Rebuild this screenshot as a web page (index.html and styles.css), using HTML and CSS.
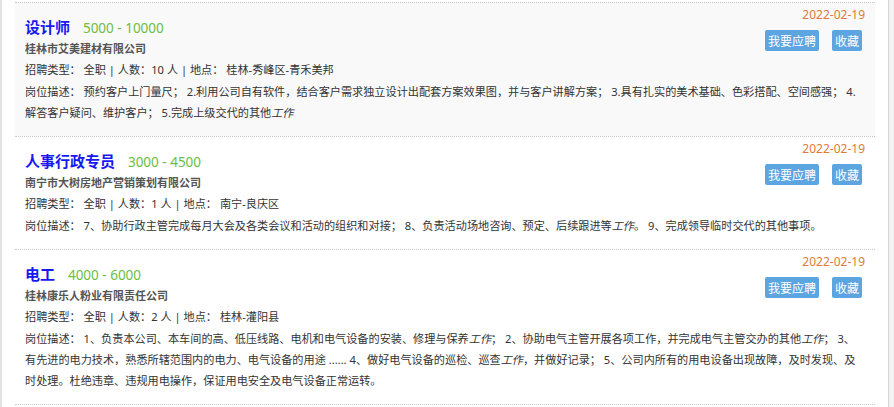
FILE: index.html
```html
<!DOCTYPE html>
<html lang="zh-CN">
<head>
    <meta charset="UTF-8">
    <meta name="viewport" content="width=device-width, initial-scale=1.0">
    <title>招聘信息</title>
    <link rel="stylesheet" href="styles.css">
</head>
<body>
    <div class="page">
        <div class="main">
            <!-- 职位 1 -->
            <div class="job active">
                <div class="job-head">
                    <div class="job-left">
                        <div class="job-title">
                            <a href="#" class="name">设计师</a>
                            <span class="salary">5000 - 10000</span>
                        </div>
                        <div class="company">桂林市艾美建材有限公司</div>
                    </div>
                    <div class="job-right">
                        <div class="date">2022-02-19</div>
                        <div class="actions">
                            <button class="btn">我要应聘</button>
                            <button class="btn">收藏</button>
                        </div>
                    </div>
                </div>
                <div class="info">招聘类型： 全职 | 人数：10 人 | 地点： 桂林-秀峰区-青禾美邦</div>
                <div class="desc">岗位描述： 预约客户上门量尺； 2.利用公司自有软件，结合客户需求独立设计出配套方案效果图，并与客户讲解方案； 3.具有扎实的美术基础、色彩搭配、空间感强； 4.解答客户疑问、维护客户； 5.完成上级交代的其他<i>工作</i></div>
            </div>
            <!-- 职位 2 -->
            <div class="job">
                <div class="job-head">
                    <div class="job-left">
                        <div class="job-title">
                            <a href="#" class="name">人事行政专员</a>
                            <span class="salary">3000 - 4500</span>
                        </div>
                        <div class="company">南宁市大树房地产营销策划有限公司</div>
                    </div>
                    <div class="job-right">
                        <div class="date">2022-02-19</div>
                        <div class="actions">
                            <button class="btn">我要应聘</button>
                            <button class="btn">收藏</button>
                        </div>
                    </div>
                </div>
                <div class="info">招聘类型： 全职 | 人数：1 人 | 地点： 南宁-良庆区</div>
                <div class="desc">岗位描述： 7、协助行政主管完成每月大会及各类会议和活动的组织和对接； 8、负责活动场地咨询、预定、后续跟进等<i>工作</i>。 9、完成领导临时交代的其他事项。</div>
            </div>
            <!-- 职位 3 -->
            <div class="job">
                <div class="job-head">
                    <div class="job-left">
                        <div class="job-title">
                            <a href="#" class="name">电工</a>
                            <span class="salary">4000 - 6000</span>
                        </div>
                        <div class="company">桂林康乐人粉业有限责任公司</div>
                    </div>
                    <div class="job-right">
                        <div class="date">2022-02-19</div>
                        <div class="actions">
                            <button class="btn">我要应聘</button>
                            <button class="btn">收藏</button>
                        </div>
                    </div>
                </div>
                <div class="info">招聘类型： 全职 | 人数：2 人 | 地点： 桂林-灌阳县</div>
                <div class="desc">岗位描述： 1、负责本公司、本车间的高、低压线路、电机和电气设备的安装、修理与保养<i>工作</i>； 2、协助电气主管开展各项工作，并完成电气主管交办的其他<i>工作</i>； 3、有先进的电力技术，熟悉所辖范围内的电力、电气设备的用途 ...... 4、做好电气设备的巡检、巡查<i>工作</i>，并做好记录； 5、公司内所有的用电设备出现故障，及时发现、及时处理。杜绝违章、违规用电操作，保证用电安全及电气设备正常运转。</div>
            </div>
        </div>
        <div class="edge"></div>
    </div>
</body>
</html>
```

FILE: styles.css
```css
html, body {
    margin: 0;
    height: 100%;
}

body {
    font-family: 'Noto Sans', 'Noto Sans CJK SC', sans-serif;
    font-size: 11.15px;
    color: #333;
    background-color: #fff;
    border-left: 2px solid #e2e2e2;
    box-sizing: border-box;
    overflow: hidden;
}

.page {
    display: flex;
    height: 100%;
}

.main {
    flex: 1;
    padding: 2px 13px 0 13px;
}

.edge {
    width: 5px;
    border-left: 1px solid #d6d6d6;
    background-color: #f3f3f3;
}

.job {
    padding: 6px 10px 13px 10px;
    border-top: 1px dotted #c8c8c8;
}

.job:last-child {
    border-bottom: 1px dotted #c8c8c8;
}

.job.active {
    background-color: #f9f9f9;
}

.job-head {
    display: flex;
    justify-content: space-between;
}

.job-left {
    padding-top: 6px;
}

.job-title {
    height: 24px;
    line-height: 24px;
}

.name {
    font-size: 15px;
    font-weight: bold;
    color: #1818f0;
    text-decoration: none;
}

.salary {
    margin-left: 10px;
    font-size: 13.5px;
    color: #6cbd45;
}

.company {
    line-height: 20px;
    font-size: 11px;
    font-weight: bold;
    color: #555;
}

.job-right {
    display: flex;
    flex-direction: column;
    align-items: flex-end;
}

.date {
    line-height: 12px;
    font-size: 12px;
    color: #e07a3a;
}

.actions {
    display: flex;
    gap: 13px;
    margin-top: 9px;
    margin-right: 3px;
}

.btn {
    height: 21px;
    padding: 0 3px;
    border: none;
    border-radius: 2px;
    background-color: #5da5e1;
    color: #fff;
    font-family: inherit;
    font-size: 12px;
    cursor: pointer;
}

.info {
    line-height: 22px;
}

.desc {
    line-height: 21px;
}

.desc i {
    font-style: italic;
}
```
